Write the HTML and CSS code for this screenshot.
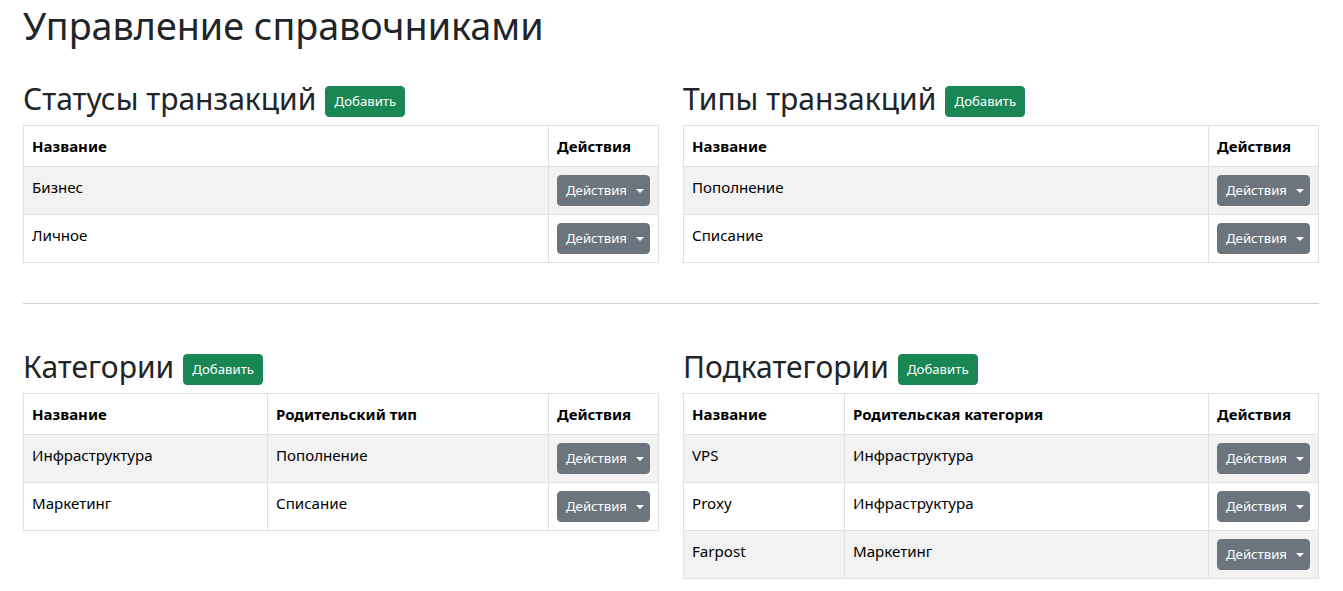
FILE: index.html
```html
<!DOCTYPE html>
<html lang="ru">
<head>
<meta charset="utf-8">
<title>Управление справочниками</title>
<link rel="stylesheet" href="styles.css">
</head>
<body>
<div class="page">
  <h1 class="title">Управление справочниками</h1>

  <div class="grid first">
    <section class="block">
      <div class="block-head">
        <h2>Статусы транзакций</h2>
        <button class="btn btn-add">Добавить</button>
      </div>
      <table class="tbl">
        <colgroup><col><col class="c-act"></colgroup>
        <thead><tr><th>Название</th><th>Действия</th></tr></thead>
        <tbody>
          <tr><td>Бизнес</td><td><button class="btn btn-act">Действия<span class="caret"></span></button></td></tr>
          <tr><td>Личное</td><td><button class="btn btn-act">Действия<span class="caret"></span></button></td></tr>
        </tbody>
      </table>
    </section>
    <section class="block">
      <div class="block-head">
        <h2>Типы транзакций</h2>
        <button class="btn btn-add">Добавить</button>
      </div>
      <table class="tbl">
        <colgroup><col><col class="c-act"></colgroup>
        <thead><tr><th>Название</th><th>Действия</th></tr></thead>
        <tbody>
          <tr><td>Пополнение</td><td><button class="btn btn-act">Действия<span class="caret"></span></button></td></tr>
          <tr><td>Списание</td><td><button class="btn btn-act">Действия<span class="caret"></span></button></td></tr>
        </tbody>
      </table>
    </section>
  </div>

  <hr class="divider">

  <div class="grid second">
    <section class="block">
      <div class="block-head">
        <h2>Категории</h2>
        <button class="btn btn-add">Добавить</button>
      </div>
      <table class="tbl">
        <colgroup><col class="c-cat-name"><col><col class="c-act"></colgroup>
        <thead><tr><th>Название</th><th>Родительский тип</th><th>Действия</th></tr></thead>
        <tbody>
          <tr><td>Инфраструктура</td><td>Пополнение</td><td><button class="btn btn-act">Действия<span class="caret"></span></button></td></tr>
          <tr><td>Маркетинг</td><td>Списание</td><td><button class="btn btn-act">Действия<span class="caret"></span></button></td></tr>
        </tbody>
      </table>
    </section>
    <section class="block">
      <div class="block-head">
        <h2>Подкатегории</h2>
        <button class="btn btn-add">Добавить</button>
      </div>
      <table class="tbl">
        <colgroup><col class="c-sub-name"><col><col class="c-act"></colgroup>
        <thead><tr><th>Название</th><th>Родительская категория</th><th>Действия</th></tr></thead>
        <tbody>
          <tr><td>VPS</td><td>Инфраструктура</td><td><button class="btn btn-act">Действия<span class="caret"></span></button></td></tr>
          <tr><td>Proxy</td><td>Инфраструктура</td><td><button class="btn btn-act">Действия<span class="caret"></span></button></td></tr>
          <tr><td>Farpost</td><td>Маркетинг</td><td><button class="btn btn-act">Действия<span class="caret"></span></button></td></tr>
        </tbody>
      </table>
    </section>
  </div>
</div>
</body>
</html>
```

FILE: styles.css
```css
* { box-sizing: border-box; }

html, body {
  margin: 0;
  padding: 0;
  background: #fff;
  color: #212529;
  font-family: "Noto Sans", "Open Sans", sans-serif;
  font-size: 15.1px;
  line-height: 1.5;
}

.page {
  padding: 2px 24px 0 23px;
}

.title {
  margin: 0;
  font-size: 37.7px;
  font-weight: 400;
  line-height: 48px;
  color: #212529;
}

.grid {
  display: grid;
  grid-template-columns: 1fr 1fr;
  column-gap: 24px;
  align-items: start;
}

.grid.first { margin-top: 30px; }
.grid.second { margin-top: 44px; }

.block-head {
  display: flex;
  align-items: flex-end;
  gap: 9px;
  height: 38px;
  margin-bottom: 7px;
}

.block-head h2 {
  margin: 0;
  font-size: 30px;
  font-weight: 400;
  line-height: 38px;
  white-space: nowrap;
  color: #212529;
}

.btn {
  font-family: inherit;
  border: 1px solid transparent;
  border-radius: 4px;
  font-size: 13.2px;
  line-height: 21px;
  padding: 4px 8px;
  color: #fff;
  cursor: pointer;
}

.btn-add {
  background: #198754;
  border-color: #198754;
  margin-bottom: 1px;
  min-width: 80px;
}

.btn-act {
  background: #6c757d;
  border-color: #6c757d;
  display: inline-flex;
  align-items: center;
  justify-content: flex-start;
  width: 93px;
  white-space: nowrap;
  padding: 4px 8px;
}

.caret {
  display: inline-block;
  margin-left: 9px;
  margin-top: 1px;
  border-top: 4px solid #fff;
  border-left: 4px solid transparent;
  border-right: 4px solid transparent;
}

.tbl {
  width: 100%;
  border-collapse: collapse;
  color: #000;
  margin: 0;
}

.tbl th, .tbl td {
  border: 1px solid #dee2e6;
  padding: 8px;
  text-align: left;
  vertical-align: top;
  line-height: 24px;
}

.tbl th { font-weight: 700; font-size: 15px; }

.tbl tbody tr:nth-child(odd) td { background: #f2f2f2; }

.c-act { width: 110px; }
.c-cat-name { width: 244px; }
.c-sub-name { width: 161px; }

.divider {
  margin: 40px 0 0 0;
  border: 0;
  border-top: 1px solid #cfd0d1;
  height: 0;
}
```
